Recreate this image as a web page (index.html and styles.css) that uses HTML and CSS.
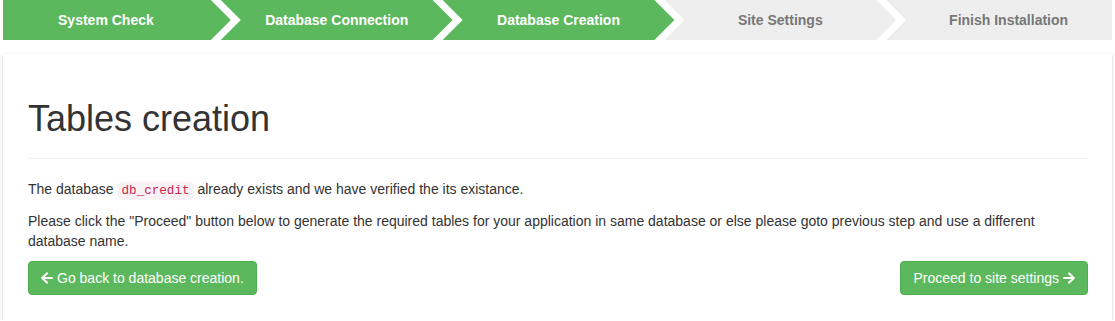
FILE: index.html
```html
<!DOCTYPE html>
<html lang="en">
<head>
    <meta charset="UTF-8">
    <meta name="viewport" content="width=device-width, initial-scale=1.0">
    <title>Installation - Tables creation</title>
    <link rel="stylesheet" href="styles.css">
</head>
<body>
    <ol class="steps">
        <li class="step done">System Check</li>
        <li class="step done">Database Connection</li>
        <li class="step done">Database Creation</li>
        <li class="step">Site Settings</li>
        <li class="step">Finish Installation</li>
    </ol>

    <div class="card">
        <div class="page-header">
            <h1>Tables creation</h1>
        </div>
        <p>The database <code>db_credit</code> already exists and we have verified the its existance.</p>
        <p>Please click the "Proceed" button below to generate the required tables for your application in same database or else please goto previous step and use a different database name.</p>

        <div class="actions">
            <a href="#" class="btn">
                <svg class="icon" viewBox="0 30 448 452"><path d="M257.5 445.1l-22.2 22.2c-9.4 9.4-24.6 9.4-33.9 0L7 273c-9.4-9.4-9.4-24.6 0-33.9L201.4 44.7c9.4-9.4 24.6-9.4 33.9 0l22.2 22.2c9.5 9.5 9.3 25-.4 34.3L136.6 216H424c13.3 0 24 10.7 24 24v32c0 13.3-10.7 24-24 24H136.6l120.5 114.8c9.8 9.3 10 24.8.4 34.3z"/></svg>
                Go back to database creation.
            </a>
            <a href="#" class="btn">
                Proceed to site settings
                <svg class="icon" viewBox="0 30 448 452"><path d="M190.5 66.9l22.2-22.2c9.4-9.4 24.6-9.4 33.9 0L441 239c9.4 9.4 9.4 24.6 0 33.9L246.6 467.3c-9.4 9.4-24.6 9.4-33.9 0l-22.2-22.2c-9.5-9.5-9.3-25 .4-34.3L311.4 296H24c-13.3 0-24-10.7-24-24v-32c0-13.3 10.7-24 24-24h287.4L190.9 101.2c-9.8-9.3-10-24.8-.4-34.3z"/></svg>
            </a>
        </div>
    </div>
</body>
</html>
```

FILE: styles.css
```css
* {
    box-sizing: border-box;
}

body {
    margin: 0;
    padding: 0 3px;
    font-family: 'Liberation Sans', Arial, sans-serif;
    font-size: 14px;
    line-height: 20px;
    color: #333;
    background: #fff;
}

/* wizard steps */
.steps {
    display: grid;
    grid-template-columns: repeat(5, 1fr);
    height: 40px;
    margin: 0;
    padding: 0;
    list-style: none;
}

.step {
    margin: 0 -6px 0 -4px;
    padding: 0 20px;
    background: #eee;
    color: #777;
    font-weight: bold;
    line-height: 40px;
    text-align: center;
    white-space: nowrap;
    clip-path: polygon(0 0, calc(100% - 20px) 0, 100% 50%, calc(100% - 20px) 100%, 0 100%, 20px 50%);
}

.step.done {
    background: #5cb85c;
    color: #fff;
}

.step:first-child {
    margin-left: 0;
    padding: 0 22px 0 0;
    clip-path: polygon(0 0, calc(100% - 20px) 0, 100% 50%, calc(100% - 20px) 100%, 0 100%);
}

.step:last-child {
    margin-right: 0;
    padding: 0 1px 0 20px;
    clip-path: polygon(0 0, 100% 0, 100% 100%, 0 100%, 20px 50%);
}

/* content card */
.card {
    margin-top: 14px;
    padding: 5px 24px 25px 25px;
    background: #fff;
    box-shadow: 0 1px 3px rgba(0,0,0,0.22);
}

.page-header {
    margin: 40px 0 20px;
    padding-bottom: 9px;
    border-bottom: 1px solid #eee;
}

.page-header h1 {
    margin: 0 0 10px;
    font-size: 36px;
    font-weight: normal;
    line-height: 1.1;
    color: #333;
}

.card p {
    margin: 0 0 10px;
}

code {
    padding: 2px 4px;
    font-family: 'Liberation Mono', monospace;
    font-size: 90%;
    color: #c7254e;
    background: #f9f2f4;
    border-radius: 4px;
}

.actions {
    display: flex;
    justify-content: space-between;
    margin-top: 1px;
}

.btn {
    display: inline-flex;
    align-items: center;
    gap: 4px;
    padding: 6px 12px;
    font-size: 14px;
    line-height: 20px;
    color: #fff;
    text-decoration: none;
    background: #5cb85c;
    border: 1px solid #4cae4c;
    border-radius: 4px;
}

.icon {
    width: 12px;
    height: 12px;
    fill: currentColor;
}
```
